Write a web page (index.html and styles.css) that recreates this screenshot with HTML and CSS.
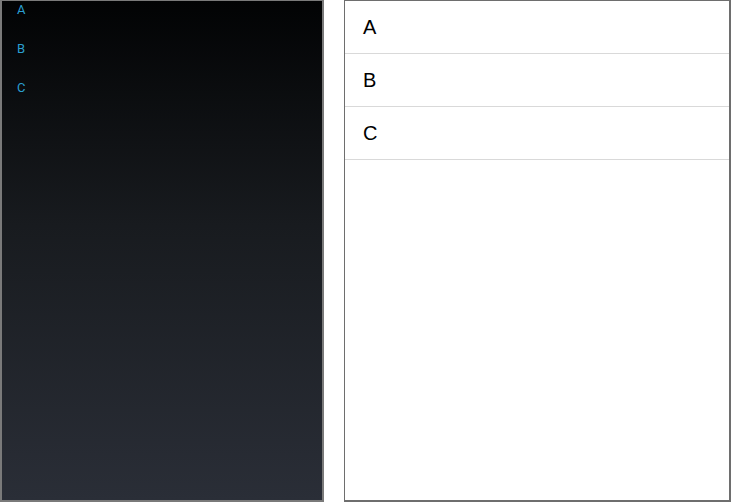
FILE: index.html
```html
<!DOCTYPE html>
<html>
<head>
<meta charset="utf-8">
<link rel="stylesheet" href="styles.css">
</head>
<body>
<div class="page">
  <div class="drawer">
    <ul class="drawer-list">
      <li class="drawer-item">A</li>
      <li class="drawer-item">B</li>
      <li class="drawer-item">C</li>
    </ul>
  </div>
  <div class="content">
    <ul class="content-list">
      <li class="content-item">A</li>
      <li class="content-item">B</li>
      <li class="content-item">C</li>
    </ul>
  </div>
</div>
</body>
</html>
```
FILE: styles.css
```css
html, body {
  margin: 0;
  padding: 0;
  background: #ffffff;
}
.page {
  display: flex;
  gap: 20px;
  width: 731px;
  height: 502px;
}
.drawer {
  box-sizing: border-box;
  width: 324px;
  height: 502px;
  border-style: solid;
  border-color: #7a7a7a;
  border-width: 1px 2px 2px 2px;
  background: linear-gradient(to bottom, #020304 0%, #181b1f 45%, #2a2e37 100%);
}
.drawer-list {
  list-style: none;
  margin: 0;
  padding: 0;
}
.drawer-item {
  height: 39px;
  box-sizing: border-box;
  padding: 1px 0 0 15px;
  font-family: Roboto, "Liberation Sans", sans-serif;
  font-size: 13px;
  line-height: 15px;
  color: #2a9fd0;
}
.content {
  box-sizing: border-box;
  flex: 1;
  height: 502px;
  border-style: solid;
  border-color: #6e6e6e;
  border-width: 1px 2px 2px 1px;
}
.content-list {
  list-style: none;
  margin: 0;
  padding: 0;
}
.content-item {
  box-sizing: border-box;
  height: 53px;
  border-bottom: 1px solid #d9d9d9;
  padding-left: 18px;
  font-family: "Liberation Sans", Arial, sans-serif;
  font-size: 20px;
  line-height: 52px;
  color: #000000;
}
```
